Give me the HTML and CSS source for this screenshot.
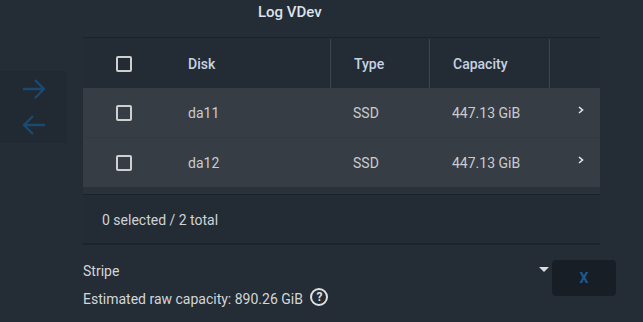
FILE: index.html
```html
<!DOCTYPE html>
<html lang="en">
<head>
  <meta charset="UTF-8">
  <title>Log VDev</title>
  <link rel="stylesheet" href="styles.css">
</head>
<body>
  <div class="page">
    <!-- move buttons -->
    <div class="side">
      <div class="arrows">
        <svg width="26" height="22" viewBox="0 0 26 22"><path d="M2 11 H23 M14 2 L23 11 L14 20" fill="none" stroke="#1b4a70" stroke-width="2.4"/></svg>
        <svg width="26" height="22" viewBox="0 0 26 22"><path d="M24 11 H3 M12 2 L3 11 L12 20" fill="none" stroke="#1b4a70" stroke-width="2.4"/></svg>
      </div>
    </div>

    <div class="main">
      <div class="title">Log VDev</div>

      <div class="card">
        <div class="row head">
          <div class="cell check"><span class="box"></span></div>
          <div class="cell disk">Disk</div>
          <div class="cell type sep">Type</div>
          <div class="cell cap sep">Capacity</div>
          <div class="cell more sep"></div>
        </div>
        <div class="row item">
          <div class="cell check"><span class="box"></span></div>
          <div class="cell disk">da11</div>
          <div class="cell type">SSD</div>
          <div class="cell cap">447.13 GiB</div>
          <div class="cell more"><svg width="6" height="8" viewBox="0 0 6 8"><path d="M1 1 L4.5 4 L1 7" fill="none" stroke="#e6e6e6" stroke-width="1.6"/></svg></div>
        </div>
        <div class="row item">
          <div class="cell check"><span class="box"></span></div>
          <div class="cell disk">da12</div>
          <div class="cell type">SSD</div>
          <div class="cell cap">447.13 GiB</div>
          <div class="cell more"><svg width="6" height="8" viewBox="0 0 6 8"><path d="M1 1 L4.5 4 L1 7" fill="none" stroke="#e6e6e6" stroke-width="1.6"/></svg></div>
        </div>
        <div class="band"></div>
        <div class="foot">0 selected / 2 total</div>
      </div>

      <div class="bottom">
        <div class="info">
          <div class="select">
            <span>Stripe</span>
            <span class="caret"></span>
          </div>
          <div class="estimate">Estimated raw capacity: 890.26 GiB <span class="help">?</span></div>
        </div>
        <button class="remove">X</button>
      </div>
    </div>
  </div>
</body>
</html>
```

FILE: styles.css
```css
body {
  margin: 0;
  background-color: #242c35;
  font-family: Roboto, "Liberation Sans", sans-serif;
  color: #c9ccd0;
  font-size: 14px;
}

.page {
  display: flex;
  height: 322px;
  overflow: hidden;
}

.side {
  width: 83px;
  flex-shrink: 0;
}

.arrows {
  margin-top: 71px;
  width: 67px;
  height: 72px;
  background-color: #212932;
  display: flex;
  flex-direction: column;
  align-items: center;
  justify-content: center;
  gap: 14px;
}

.main {
  width: 517px;
  flex-shrink: 0;
}

.title {
  padding-left: 175px;
  height: 37px;
  line-height: 24px;
  font-size: 15px;
  font-weight: 500;
  color: #dde3ea;
}

.card {
  background-color: #232b35;
  border-top: 1px solid #1b222a;
  border-bottom: 2px solid #1c232b;
}

.row {
  display: flex;
  height: 49px;
}

.head {
  padding-top: 1px;
}

.row.item {
  background-color: #373d44;
}

.row.item + .row.item {
  border-top: 1px solid #33393f;
}

.cell {
  display: flex;
  align-items: center;
  padding-left: 23px;
  box-sizing: border-box;
}

.head .cell {
  font-weight: 500;
  color: #c5d3e2;
}

.sep {
  border-left: 1px solid #3b4550;
}

.check {
  width: 82px;
  padding-left: 33px;
}

.disk {
  width: 165px;
}

.type {
  width: 99px;
}

.cap {
  width: 120px;
}

.more {
  flex: 1;
  padding-left: 29px;
  padding-bottom: 6px;
}

.box {
  width: 12px;
  height: 12px;
  border: 2px solid #cfcfcf;
  border-radius: 2px;
}

.band {
  height: 7px;
  background-color: #29313a;
  border-bottom: 1px solid #1b222a;
}

.foot {
  height: 48px;
  line-height: 50px;
  padding-left: 19px;
  color: #d0d3d6;
}

.bottom {
  display: flex;
  align-items: flex-start;
  margin-top: 15px;
}

.info {
  width: 469px;
  flex-shrink: 0;
}

.select {
  display: flex;
  justify-content: space-between;
  align-items: center;
  height: 22px;
  padding-right: 3px;
  color: #d3d6da;
}

.caret {
  width: 0;
  height: 0;
  border-left: 5px solid transparent;
  border-right: 5px solid transparent;
  border-top: 5px solid #dcdcdc;
  margin-top: -4px;
}

.estimate {
  margin-top: 6px;
  color: #d3d6da;
}

.help {
  display: inline-block;
  width: 14px;
  height: 14px;
  border: 2px solid #e0e0e0;
  border-radius: 50%;
  font-size: 12px;
  font-weight: bold;
  line-height: 14px;
  text-align: center;
  color: #e0e0e0;
  margin-left: 4px;
  vertical-align: 3px;
}

.remove {
  width: 64px;
  height: 36px;
  border: none;
  border-radius: 4px;
  background-color: #181e26;
  color: #1d5a90;
  font-family: Roboto, "Liberation Sans", sans-serif;
  font-weight: bold;
  font-size: 14px;
  margin-left: 0;
  flex-shrink: 0;
}
```
